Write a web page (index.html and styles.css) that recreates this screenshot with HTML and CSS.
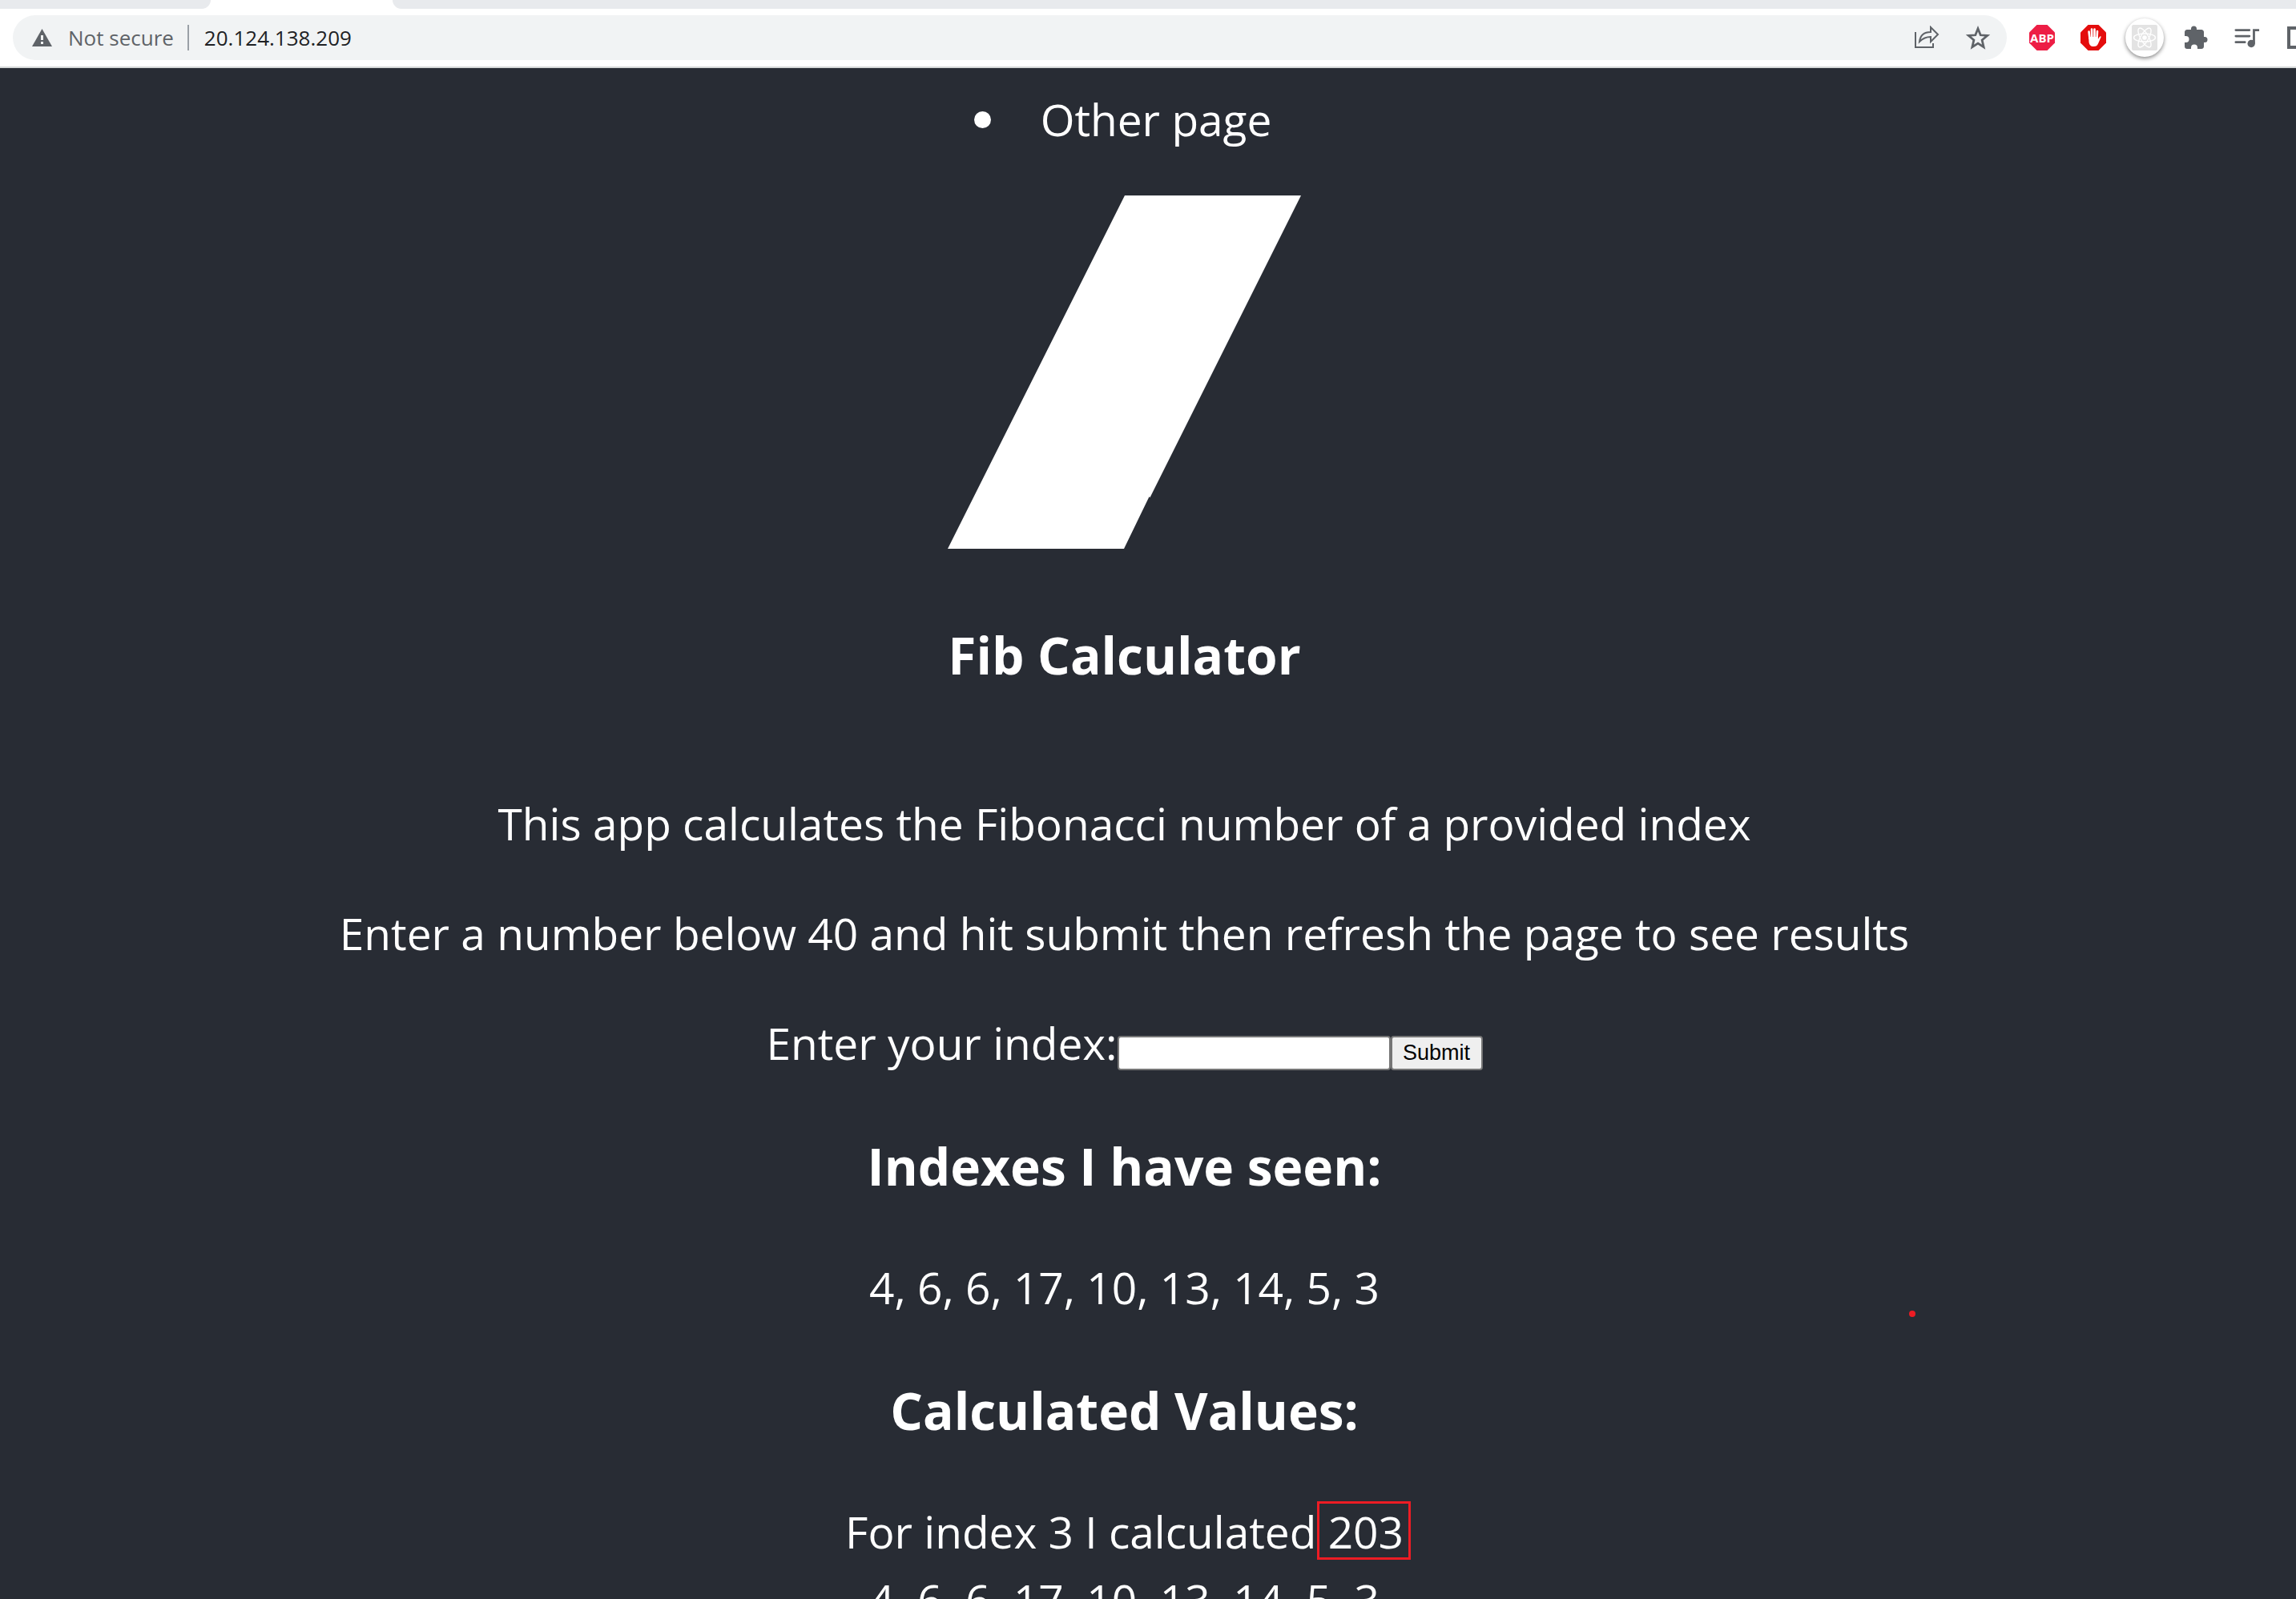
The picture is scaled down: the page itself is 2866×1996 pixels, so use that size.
FILE: index.html
```html
<!DOCTYPE html>
<html lang="en">
<head>
<meta charset="utf-8">
<title>Fib Calculator</title>
<link rel="stylesheet" href="styles.css">
</head>
<body>
<div class="window">
  <div class="tabs"><div class="tab tab-left"></div><div class="tab tab-right"></div></div>
  <div class="toolbar">
    <div class="omnibox">
      <svg class="warn" width="25" height="22" viewBox="0 0 25 22"><path fill="#5f6368" d="M12.5 0 25 22H0z"/><path fill="#f1f3f4" d="M11 8h3v6h-3zM11 16h3v3h-3z"/></svg>
      <span class="security">Not secure</span>
      <span class="divider"></span>
      <span class="address">20.124.138.209</span>
      <button class="icon share" aria-label="Share"><svg width="32" height="30" viewBox="0 0 32 30" fill="none" stroke="#5f6368" stroke-width="2"><path d="M2 8v19h22v-5"/><path stroke-linejoin="miter" d="M7 20C8 12 13 8 21 8V2l9 9-9 9v-6c-6 0-10 2-14 6z"/></svg></button>
      <button class="icon star" aria-label="Bookmark"><svg width="32" height="32" viewBox="0 0 30 30" fill="none" stroke="#5f6368" stroke-width="2.600"><path d="M15 4.500 18 12l8 .6-6.200 5.200L21.700 26 15 21.600 8.300 26l1.900-8.200L4 12.600l8-.6z"/></svg></button>
    </div>
    <button class="icon" aria-label="Adblock Plus"><svg width="32" height="32" viewBox="0 0 32 32"><path fill="#ed1e45" d="M9.500 0h13L32 9.500v13L22.500 32h-13L0 22.500v-13z"/><text class="abp" x="16" y="22" text-anchor="middle">ABP</text></svg></button>
    <button class="icon" aria-label="AdBlock"><svg width="32" height="32" viewBox="0 0 32 32"><path fill="#e40d0d" d="M9.500 0h13L32 9.500v13L22.500 32h-13L0 22.500v-13z"/><g stroke="#fff" stroke-width="2.600" stroke-linecap="round" fill="none"><path d="M10.500 8.500 11.500 17M14 5.500l.3 11M17.500 5.500v11M21 8l-.5 9"/></g><path fill="#fff" d="M10.200 15h11.600v3l2-3c.8-1.200 2.200-.8 1.700.4L22 23.500c-1 2.500-2.500 3.500-5.500 3.500-4 0-5.500-2-6-5.500z"/></svg></button>
    <button class="icon round" aria-label="React Developer Tools"><svg width="32" height="32" viewBox="0 0 32 32"><rect width="32" height="32" rx="2" fill="#e3e3e3"/><g fill="none" stroke="#fff" stroke-width="1.400"><ellipse cx="16" cy="16" rx="13.500" ry="5"/><ellipse cx="16" cy="16" rx="13.500" ry="5" transform="rotate(60 16 16)"/><ellipse cx="16" cy="16" rx="13.500" ry="5" transform="rotate(120 16 16)"/></g><circle cx="16" cy="16" r="2.800" fill="#fff"/></svg></button>
    <button class="icon" aria-label="Extensions"><svg width="30" height="30" viewBox="0 0 30 30"><path fill="#5f6368" d="M26 14h-1V8c0-1.600-1.400-3-3-3h-6V4a3.500 3.500 0 0 0-7 0v1H4C2.300 5 1 6.400 1 8v5h1.500a4 4 0 0 1 0 8H1v5c0 1.700 1.300 3 3 3h5v-1.500a4 4 0 0 1 8 0V29h5c1.600 0 3-1.300 3-3v-5h1a3.500 3.500 0 0 0 0-7z"/></svg></button>
    <button class="icon" aria-label="Media control"><svg width="34" height="28" viewBox="0 0 34 28"><path fill="none" stroke="#5f6368" stroke-width="3" stroke-linecap="round" d="M2 4h18M2 12h18M2 20h12"/><path fill="none" stroke="#5f6368" stroke-width="3" d="M26 22V4h7"/><circle cx="22.500" cy="22" r="5" fill="#5f6368"/></svg></button>
    <button class="icon cut" aria-label="Side panel"><svg width="11" height="28" viewBox="0 0 11 28"><path fill="none" stroke="#5f6368" stroke-width="4" d="M12 2H2v24h10"/></svg></button>
  </div>
  <main class="app">
    <ul class="nav"><li><a href="#">Other page</a></li></ul>
    <svg class="logo" viewBox="0 0 441 441"><path fill="#fff" d="M221 0h220L252.500 377l-1-1L220 441H0z"/></svg>
    <h1 class="title">Fib Calculator</h1>
    <p class="intro">This app calculates the Fibonacci number of a provided index</p>
    <p class="hint">Enter a number below 40 and hit submit then refresh the page to see results</p>
    <form class="form"><label for="index">Enter your index:</label><input id="index" type="text"><button type="submit">Submit</button></form>
    <h2>Indexes I have seen:</h2>
    <p>4, 6, 6, 17, 10, 13, 14, 5, 3</p>
    <h2>Calculated Values:</h2>
    <p class="result">For index 3 I calculated <span class="value">203</span></p>
    <p class="overflow">4, 6, 6, 17, 10, 13, 14, 5, 3</p>
    <span class="dot"></span>
  </main>
</div>
</body>
</html>
```
FILE: styles.css
```css
* { box-sizing: border-box; }
body { margin: 0; background: #282c34; font-family: "Open Sans", "Noto Sans", sans-serif; }
.window { height: 100vh; overflow: hidden; display: flex; flex-direction: column; }
.tabs { display: flex; flex: none; justify-content: space-between; gap: 227px; height: 11px; background: #fff; }
.tab { background: #e8eaed; }
.tab-left { width: 263px; border-bottom-right-radius: 16px; }
.tab-right { flex: 1; border-bottom-left-radius: 16px; }
.toolbar { display: flex; flex: none; align-items: center; height: 74px; padding-left: 16px; background: #fff; border-bottom: 2px solid #d5d7d7; overflow: hidden; }
.omnibox { display: flex; align-items: center; flex: 1; height: 56px; padding: 0 20px 0 24px; border-radius: 28px; background: #f1f3f4; font-size: 26px; margin-right: 28px; }
.security { margin-left: 20px; color: #5f6368; }
.divider { width: 2px; height: 32px; margin: 0 19px 0 17px; background: #9aa0a6; }
.address { color: #202124; }
.icon { display: flex; align-items: center; justify-content: center; flex: none; padding: 0; border: 0; background: none; width: 32px; height: 32px; margin-right: 32px; }
.share { margin-left: auto; }
.star { margin-right: 0; }
.round { width: 48px; height: 48px; margin: 0 24px 0 -8px; border-radius: 50%; background: #fff; box-shadow: 0 2px 5px #0007; }
.cut { width: 13px; margin-right: 0; justify-content: flex-end; }
.abp { font: bold 15px "Open Sans", sans-serif; fill: #fff; }
.app { position: relative; display: flex; flex-direction: column; align-items: center; padding: 25px 59px 0 0; color: #fff; font-size: 55px; line-height: 78px; white-space: nowrap; }
.nav { margin: 0; padding: 0; list-style: none; }
.nav li { display: flex; align-items: center; gap: 62px; padding-right: 4px; }
.nav li::before { content: ""; width: 21px; height: 21px; border-radius: 50%; background: #fff; }
.nav a { color: inherit; text-decoration: none; }
.logo { width: 441px; height: 441px; margin-top: 56px; }
h1, h2 { margin: 70px 0 67px; font-size: 64px; line-height: 90px; }
.title { margin: 88px 0 126px; }
p { margin: 0; }
.hint, .form { margin-top: 59px; }
.form { display: flex; align-items: center; }
.form input, .form button { height: 43px; margin-top: 25px; border: 2px solid #767676; border-radius: 4px; font: 27px "Liberation Sans", Arial, sans-serif; }
.form input { width: 341px; background: #fff; }
.form button { width: 115px; padding: 0; background: #efefef; color: #000; }
.value { position: relative; }
.value::after { content: ""; position: absolute; inset: 0 -9px 2px -14px; border: 3px solid #ed1c24; }
.overflow { margin-top: 7px; }
.dot { position: absolute; left: 2383px; top: 1551px; width: 8px; height: 8px; border-radius: 50%; background: #ed1c24; }
```
